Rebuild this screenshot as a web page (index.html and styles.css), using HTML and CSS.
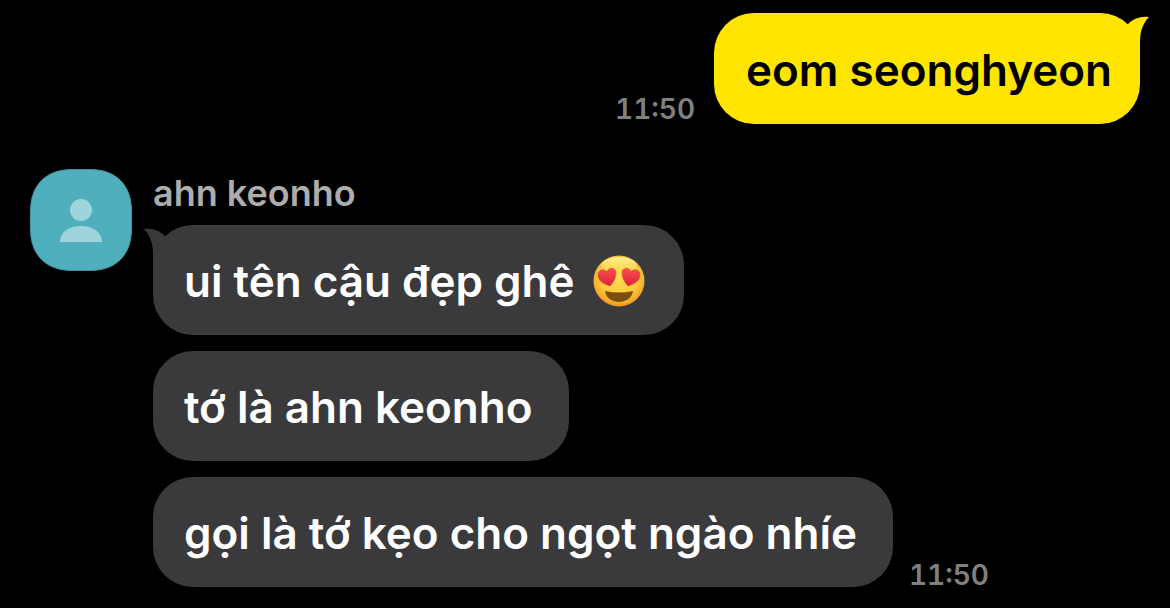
FILE: index.html
```
<!DOCTYPE html>
<html lang="vi">
<head>
	<meta charset="utf-8">
	<meta name="viewport" content="width=device-width, initial-scale=1">
	<title>ahn keonho</title>
	<link rel="stylesheet" href="styles.css">
</head>
<body>
	<main class="chat">
		<section class="row mine">
			<time class="time">11:50</time>
			<p class="bubble">
				eom seonghyeon
				<svg class="tail" viewBox="0 0 24 42" aria-hidden="true">
					<path d="M0 14L2 11C7 6 14 3 23 4C17 10 14 18 14 29V42H4Z"/>
				</svg>
			</p>
		</section>

		<section class="row theirs">
			<svg class="avatar" viewBox="0 0 102 102" role="img" aria-label="ahn keonho">
				<path class="avatar-back" d="M42 .5H60C86 .5 101.5 16 101.5 42V60C101.5 86 86 101.5 60 101.5H42C16 101.5 .5 86 .5 60V42C.5 16 16 .5 42 .5Z"/>
				<circle class="avatar-person" cx="51" cy="41" r="11"/>
				<path class="avatar-person" d="M30 73C30 63 39 57 51 57C63 57 72 63 72 73Z"/>
			</svg>
			<div class="messages">
				<h2 class="name">ahn keonho</h2>
				<p class="bubble">
					ui tên cậu đẹp ghê
					<svg class="emoji" viewBox="0 0 52 52" role="img" aria-label="😍">
						<defs>
							<radialGradient id="face" cx="50%" cy="42%" r="60%">
								<stop offset="0" stop-color="#ffdc4e"/>
								<stop offset="0.6" stop-color="#fdcb3f"/>
								<stop offset="0.85" stop-color="#f8ae2b"/>
								<stop offset="1" stop-color="#e8871a"/>
							</radialGradient>
							<linearGradient id="shine" x1="0" y1="0" x2="0" y2="1">
								<stop offset="0" stop-color="#fff7a8" stop-opacity="0.9"/>
								<stop offset="1" stop-color="#ffe35c" stop-opacity="0"/>
							</linearGradient>
							<linearGradient id="heart" x1="0" y1="0" x2="0" y2="1">
								<stop offset="0" stop-color="#fb4f57"/>
								<stop offset="1" stop-color="#dc2036"/>
							</linearGradient>
						</defs>
						<circle cx="26" cy="26" r="25.5" fill="url(#face)"/>
						<ellipse cx="26" cy="11" rx="18" ry="9" fill="url(#shine)"/>
						<path d="M17 31C11 29 5 26 5 20C5 15 11 13 14 17C15 12 22 12 23 17C23 22 21 27 17 31Z" fill="url(#heart)" stroke="#c7522a" stroke-width="0.6"/>
						<path d="M35 31C41 29 47 26 47 20C47 15 41 13 38 17C37 12 30 12 29 17C29 22 31 27 35 31Z" fill="url(#heart)" stroke="#c7522a" stroke-width="0.6"/>
						<path d="M12 36Q26 39 40 36C39 43 33 47 26 47C19 47 13 43 12 36Z" fill="#7b4f0c"/>
					</svg>
					<svg class="tail" viewBox="0 0 24 42" aria-hidden="true">
						<path d="M0 14L2 11C7 6 14 3 23 4C17 10 14 18 14 29V42H4Z"/>
					</svg>
				</p>
				<p class="bubble">tớ là ahn keonho</p>
				<div class="last">
					<p class="bubble">gọi là tớ kẹo cho ngọt ngào nhíe</p>
					<time class="time">11:50</time>
				</div>
			</div>
		</section>
	</main>
</body>
</html>
```

FILE: styles.css
```
body {
	margin: 0;
	background: #000;
	font-family: Inter, "Noto Sans", sans-serif;
}

.chat {
	padding: 13px 30px 21px;
}

.row {
	display: flex;
}

.bubble {
	position: relative;
	display: flex;
	align-items: center;
	gap: 18px;
	margin: 0;
	padding: 28px 36px 26px 31px;
	border-radius: 40px;
	font-size: 44px;
	line-height: 56px;
	font-weight: 600;
	background: #3a3a3c;
	color: #fff;
}

.time {
	font-size: 28px;
	line-height: 30px;
	font-weight: 600;
	font-variant-numeric: tabular-nums;
	color: #808080;
}

.mine {
	justify-content: flex-end;
	align-items: flex-end;
	gap: 19px;
}

.mine .bubble {
	padding: 29px 28px 26px 32px;
	background: #ffe500;
	color: #000;
}

/* little horn on the upper corner of a first bubble */
.tail {
	position: absolute;
	top: 0;
	right: -10px;
	width: 24px;
	height: 42px;
	fill: #ffe500;
}

.theirs .tail {
	right: auto;
	left: -10px;
	fill: #3a3a3c;
	transform: scaleX(-1);
}

.theirs {
	gap: 21px;
	margin-top: 45px;
}

.avatar {
	flex: none;
	width: 102px;
	height: 102px;
}

.avatar-back {
	fill: #50afbd;
	stroke: #46939e;
	stroke-width: 1;
}

.avatar-person {
	fill: #a0d4dc;
}

.messages {
	display: flex;
	flex-direction: column;
	align-items: flex-start;
	gap: 16px;
}

.name {
	margin: 0 0 -8px;
	font-size: 36px;
	line-height: 48px;
	font-weight: 600;
	color: #adadad;
}

.emoji {
	width: 52px;
	height: 52px;
	margin-right: 3px;
}

.last {
	display: flex;
	align-items: flex-end;
	gap: 16px;
}

.last .time {
	line-height: 24px;
}
```
